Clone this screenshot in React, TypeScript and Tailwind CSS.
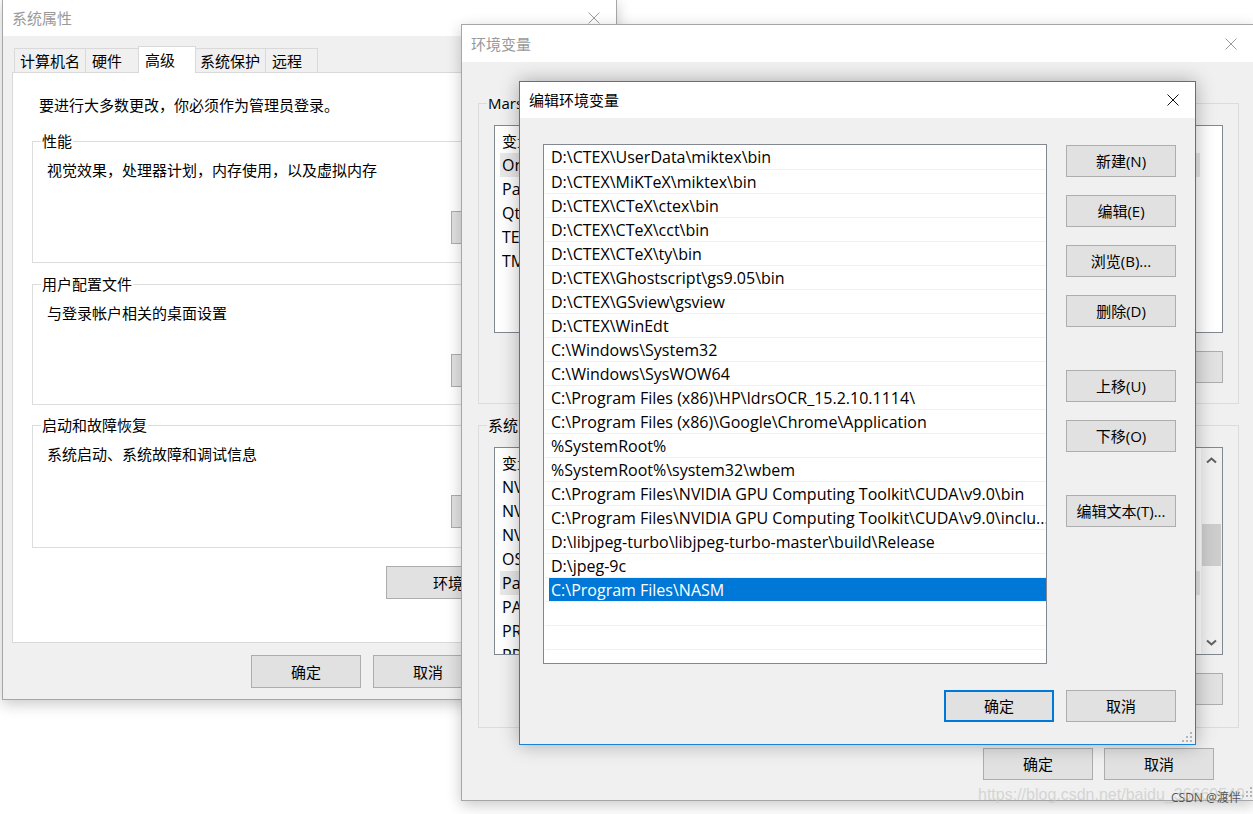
import type { ReactNode } from 'react';

const paths = [
  'D:\\CTEX\\UserData\\miktex\\bin',
  'D:\\CTEX\\MiKTeX\\miktex\\bin',
  'D:\\CTEX\\CTeX\\ctex\\bin',
  'D:\\CTEX\\CTeX\\cct\\bin',
  'D:\\CTEX\\CTeX\\ty\\bin',
  'D:\\CTEX\\Ghostscript\\gs9.05\\bin',
  'D:\\CTEX\\GSview\\gsview',
  'D:\\CTEX\\WinEdt',
  'C:\\Windows\\System32',
  'C:\\Windows\\SysWOW64',
  'C:\\Program Files (x86)\\HP\\IdrsOCR_15.2.10.1114\\',
  'C:\\Program Files (x86)\\Google\\Chrome\\Application',
  '%SystemRoot%',
  '%SystemRoot%\\system32\\wbem',
  'C:\\Program Files\\NVIDIA GPU Computing Toolkit\\CUDA\\v9.0\\bin',
  'C:\\Program Files\\NVIDIA GPU Computing Toolkit\\CUDA\\v9.0\\inclu...',
  'D:\\libjpeg-turbo\\libjpeg-turbo-master\\build\\Release',
  'D:\\jpeg-9c',
  'C:\\Program Files\\NASM',
];

const userVars = [
  ['OneDrive', 'C:\\Users\\Mars\\OneDrive'],
  ['Path', 'C:\\Users\\Mars\\AppData\\Local\\Microsoft\\WindowsApps;'],
  ['Qt5', 'D:\\Qt\\Qt5.9.0\\5.9\\msvc2015_64'],
  ['TEMP', '%USERPROFILE%\\AppData\\Local\\Temp'],
  ['TMP', '%USERPROFILE%\\AppData\\Local\\Temp'],
];

const sysVars = [
  ['NVCUDASAMPLES_ROOT', 'C:\\ProgramData\\NVIDIA Corporation\\CUDA Samples\\v9.0'],
  ['NVCUDASAMPLES9_0_ROOT', 'C:\\ProgramData\\NVIDIA Corporation\\CUDA Samples\\v9.0'],
  ['NVTOOLSEXT_PATH', 'C:\\Program Files\\NVIDIA Corporation\\NvToolsExt\\'],
  ['OS', 'Windows_NT'],
  ['Path', 'D:\\CTEX\\UserData\\miktex\\bin;D:\\CTEX\\MiKTeX\\miktex\\bin;'],
  ['PATHEXT', '.COM;.EXE;.BAT;.CMD;.VBS;.VBE;.JS;.JSE;.WSF;.WSH;.MSC'],
  ['PROCESSOR_ARCHITECTURE', 'AMD64'],
  ['PROCESSOR_IDENTIFIER', 'Intel64 Family 6 Model 158 Stepping 9, GenuineIntel'],
  ['PROCESSOR_LEVEL', '6'],
];

// ── small pieces ──────────────────────────────────────────────────────────────
const CloseX = ({ dim }: { dim?: boolean }) => (
  <svg width="12" height="12" viewBox="0 0 12 12" className="block">
    <path d="M0.5 0.5L11.5 11.5M11.5 0.5L0.5 11.5" stroke={dim ? '#9a9a9a' : '#111'} strokeWidth="1" />
  </svg>
);

const TitleBar = ({ title, dim, tall }: { title: string; dim?: boolean; tall?: boolean }) => (
  <div className={`${tall ? 'h-[37px]' : 'h-[36px]'} bg-white flex items-center justify-between shrink-0`}>
    <span className={`pl-[9px] ${dim ? 'text-[#9a9a9a]' : 'text-black'}`}>{title}</span>
    <div className="w-[44px] h-full flex items-center justify-center">
      <CloseX dim={dim} />
    </div>
  </div>
);

const Btn = ({ children, primary, tall }: { children: ReactNode; primary?: boolean; tall?: boolean }) => (
  <div
    className={`w-[110px] ${tall ? 'h-[33px]' : 'h-[32px]'} shrink-0 bg-[#e1e1e1] flex items-center justify-center whitespace-nowrap ${
      primary ? 'border-2 border-[#0078d7]' : 'border border-[#adadad]'
    }`}
  >
    {children}
  </div>
);

const Grip = () => (
  <svg width="10" height="10" viewBox="0 0 10 10" className="block">
    {[[8, 0], [4, 4], [8, 4], [0, 8], [4, 8], [8, 8]].map(([x, y]) => (
      <rect key={`${x}-${y}`} x={x} y={y} width="2" height="2" fill="#b5b5b5" />
    ))}
  </svg>
);

const Chevron = ({ down }: { down?: boolean }) => (
  <svg width="11" height="7" viewBox="0 0 11 7" className="block">
    <path d={down ? 'M1 1.5L5.5 5.5L10 1.5' : 'M1 5.5L5.5 1.5L10 5.5'} fill="none" stroke="#606060" strokeWidth="2" />
  </svg>
);

const Scrollbar = () => (
  <div className="w-[21px] shrink-0 bg-[#f0f0f0] flex flex-col">
    <div className="h-[24px] flex items-center justify-center"><Chevron /></div>
    <div className="h-[52px]" />
    <div className="h-[42px] mx-[1px] bg-[#cdcdcd]" />
    <div className="flex-1" />
    <div className="h-[24px] flex items-center justify-center"><Chevron down /></div>
  </div>
);

// ── group box: border with the caption laid over its top edge ─────────────────
const Group = ({ label, className, labelBg, children }: { label: string; className: string; labelBg: string; children: ReactNode }) => (
  <div className={`relative border border-[#dcdcdc] ${className}`}>
    <span className={`absolute top-[-11px] left-[8px] px-[1px] whitespace-nowrap ${labelBg}`}>{label}</span>
    {children}
  </div>
);

const VarList = ({ rows, selected, scroll }: { rows: string[][]; selected: number; scroll?: boolean }) => (
  <div className="w-[729px] h-[208px] border border-[#828790] bg-white flex overflow-hidden">
    <div className="flex-1 pt-[3px] overflow-hidden">
      <div className="h-[24px] flex items-center pl-[7px] whitespace-nowrap">
        <span className="w-[195px] shrink-0">变量</span>
        <span>值</span>
      </div>
      {rows.map(([name, value], i) => (
        <div
          key={name + i}
          className={`ml-[5px] w-[700px] h-[24px] flex items-center pl-[2px] text-[16px] whitespace-nowrap overflow-hidden ${
            i === selected ? 'bg-[#e8e8e8]' : ''
          }`}
        >
          <span className="w-[195px] shrink-0">{name}</span>
          <span>{value}</span>
        </div>
      ))}
    </div>
    {scroll && <Scrollbar />}
  </div>
);

// ── 系统属性 ──────────────────────────────────────────────────────────────────
const SystemProps = () => (
  <div className="absolute left-[2px] top-[-1px] w-[615px] h-[701px] border border-[#a6a6a6] bg-[#f0f0f0] flex flex-col shadow-[0_4px_14px_rgba(0,0,0,0.22)]">
    <TitleBar title="系统属性" dim />
    <div className="pt-[10px]">
      <div className="relative z-10 flex items-end h-[26px] pl-[11px]">
        <div className="w-[71px] h-[24px] border-t border-l border-[#d9d9d9] pl-[5px] flex items-center">计算机名</div>
        <div className="w-[53px] h-[24px] border-t border-l border-[#d9d9d9] pl-[6px] flex items-center">硬件</div>
        <div className="w-[58px] h-[27px] mb-[-1px] bg-white border-t border-l border-r border-[#d9d9d9] pl-[6px] flex items-center">高级</div>
        <div className="w-[69px] h-[24px] border-t border-[#d9d9d9] pl-[4px] flex items-center">系统保护</div>
        <div className="w-[53px] h-[24px] border-t border-l border-r border-[#d9d9d9] pl-[6px] flex items-center">远程</div>
      </div>
      <div className="ml-[9px] w-[594px] h-[571px] bg-white border border-[#d9d9d9] pt-[22px] pl-[19px]">
        <p className="ml-[7px]">要进行大多数更改，你必须作为管理员登录。</p>

        <Group label="性能" labelBg="bg-white" className="mt-[26px] w-[555px] h-[122px] pt-[18px] pl-[14px]">
          <p>视觉效果，处理器计划，内存使用，以及虚拟内存</p>
          <div className="mt-[31px] ml-[404px]"><Btn tall>设置(S)...</Btn></div>
        </Group>

        <Group label="用户配置文件" labelBg="bg-white" className="mt-[21px] w-[555px] h-[121px] pt-[18px] pl-[14px]">
          <p>与登录帐户相关的桌面设置</p>
          <div className="mt-[31px] ml-[404px]"><Btn tall>设置(E)...</Btn></div>
        </Group>

        <Group label="启动和故障恢复" labelBg="bg-white" className="mt-[20px] w-[555px] h-[123px] pt-[18px] pl-[14px]">
          <p>系统启动、系统故障和调试信息</p>
          <div className="mt-[31px] ml-[404px]"><Btn tall>设置(T)...</Btn></div>
        </Group>

        <div className="mt-[18px] ml-[354px] w-[190px] h-[33px] bg-[#e1e1e1] border border-[#adadad] flex items-center pl-[46px]">
          环境变量(N)...
        </div>
      </div>
      <div className="mt-[12px] pl-[248px] flex gap-[12px]">
        <Btn tall>确定</Btn>
        <Btn tall>取消</Btn>
        <Btn tall>应用(A)</Btn>
      </div>
    </div>
  </div>
);

// ── 环境变量 ──────────────────────────────────────────────────────────────────
const EnvVars = () => (
  <div className="absolute left-[461px] top-[24px] w-[793px] h-[777px] border border-[#a6a6a6] bg-[#f0f0f0] flex flex-col shadow-[0_4px_14px_rgba(0,0,0,0.22)]">
    <TitleBar title="环境变量" dim tall />
    <div className="relative flex-1 pt-[41px] pl-[16px]">
      <Group label="Mars 的用户变量(U)" labelBg="bg-[#f0f0f0]" className="w-[761px] h-[301px] pt-[21px] pl-[15px]">
        <VarList rows={userVars} selected={0} />
        <div className="mt-[18px] w-[729px] flex justify-end gap-[8px]">
          <Btn>新建(N)...</Btn>
          <Btn>编辑(E)...</Btn>
          <Btn>删除(D)</Btn>
        </div>
      </Group>

      <Group label="系统变量(S)" labelBg="bg-[#f0f0f0]" className="mt-[21px] w-[761px] h-[303px] pt-[21px] pl-[15px]">
        <VarList rows={sysVars} selected={4} scroll />
        <div className="mt-[18px] w-[729px] flex justify-end gap-[8px]">
          <Btn>新建(W)...</Btn>
          <Btn>编辑(I)...</Btn>
          <Btn>删除(L)</Btn>
        </div>
      </Group>

      <div className="mt-[20px] pr-[39px] flex justify-end gap-[11px]">
        <Btn>确定</Btn>
        <Btn>取消</Btn>
      </div>
      <div className="absolute right-[1px] bottom-[3px]"><Grip /></div>
    </div>
  </div>
);

// ── 编辑环境变量 ──────────────────────────────────────────────────────────────
const EditEnv = () => (
  <div className="absolute left-[519px] top-[81px] w-[677px] h-[664px] border border-[#1883d7] bg-[#f0f0f0] flex flex-col shadow-[0_0_18px_rgba(0,0,0,0.3)]">
    <TitleBar title="编辑环境变量" />
    <div className="relative flex-1">
      <div className="flex pt-[26px] pl-[23px]">
        <div className="w-[504px] h-[520px] border border-[#828790] bg-white overflow-hidden text-[16px]">
          {[...paths, '', '', ''].map((p, i) => (
            <div key={i} className={`ml-[1px] h-[24px] ${i > 0 ? 'border-t border-[#f0f0f0]' : ''}`}>
              <div
                className={`ml-[4px] h-full flex items-center pl-[2px] whitespace-nowrap overflow-hidden ${
                  i === paths.length - 1 ? 'bg-[#0078d7] text-white' : ''
                }`}
              >
                {p}
              </div>
            </div>
          ))}
        </div>
        <div className="ml-[19px] pt-[1px] flex flex-col">
          <Btn>新建(N)</Btn>
          <div className="mt-[18px]"><Btn>编辑(E)</Btn></div>
          <div className="mt-[18px]"><Btn>浏览(B)...</Btn></div>
          <div className="mt-[18px]"><Btn>删除(D)</Btn></div>
          <div className="mt-[43px]"><Btn>上移(U)</Btn></div>
          <div className="mt-[18px]"><Btn>下移(O)</Btn></div>
          <div className="mt-[43px]"><Btn>编辑文本(T)...</Btn></div>
        </div>
      </div>
      <div className="mt-[26px] pr-[19px] flex justify-end gap-[12px]">
        <Btn primary>确定</Btn>
        <Btn>取消</Btn>
      </div>
      <div className="absolute right-[3px] bottom-[2px]"><Grip /></div>
    </div>
  </div>
);

export default function App() {
  return (
    <div className="relative w-[1253px] h-[814px] overflow-hidden bg-white text-[15px] leading-[20px] text-black [font-family:'Open_Sans','Noto_Sans_CJK_SC',sans-serif]">
      <SystemProps />
      <EnvVars />
      <EditEnv />

      {/* watermark */}
      <span className="absolute left-[978px] top-[785px] text-[16px] leading-[20px] text-[#c8c8c8]/70 [font-family:'Liberation_Sans',sans-serif] whitespace-nowrap">
        https://blog.csdn.net/baidu_36669549
      </span>
      <span className="absolute left-[1171px] top-[790px] text-[12px] leading-[16px] text-[#555] whitespace-nowrap">
        CSDN @渡伴
      </span>
    </div>
  );
}
